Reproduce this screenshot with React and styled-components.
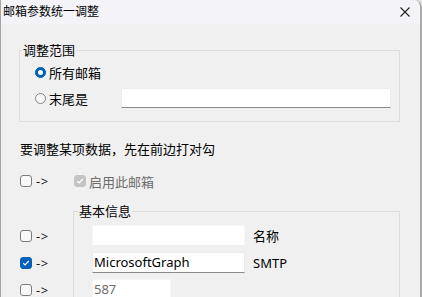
import React from 'react';
import styled, { createGlobalStyle } from 'styled-components';

const Global = createGlobalStyle`
  *, *::before, *::after { box-sizing: border-box; }
  html, body { margin: 0; padding: 0; background: #e2e2e2; }
  body {
    font-family: "Noto Sans", "Noto Sans CJK SC", sans-serif;
    font-size: 13px;
    color: #000;
  }
`;

const Window = styled.div`
  width: 422px;
  height: 297px;
  border-left: 1px solid #a4a4a4;
  border-right: 2px solid #a9a9a9;
  border-top-right-radius: 8px;
  background: #f0f0f0;
  overflow: hidden;
`;

const TitleBar = styled.div`
  height: 24px;
  background: #f3f3f8;
  display: flex;
  align-items: center;
  justify-content: space-between;
  padding: 0 10px 0 2px;
  font-size: 12px;
  line-height: 24px;
`;

const CloseIcon = () => (
  <svg width="10" height="10" viewBox="0 0 10 10">
    <path d="M0.5 0.5L9.5 9.5M9.5 0.5L0.5 9.5" stroke="#222" strokeWidth="1.1" fill="none" />
  </svg>
);

const Content = styled.div`
  padding: 18px 20px 0 18px;
`;

const Group = styled.fieldset`
  margin: 0;
  border: 1px solid #dcdcdc;
  padding: 0;
  min-width: 0;
`;

const Legend = styled.legend`
  padding: 0 1px;
  margin-left: ${p => p.$offset}px;
  line-height: 17px;
  font-size: 13px;
`;

const GroupBody = styled.div`
  padding: ${p => p.$pad};
`;

const RadioRow = styled.div`
  display: flex;
  align-items: center;
  height: 26px;
`;

const Radio = styled.span`
  width: 11px;
  height: 11px;
  border-radius: 50%;
  flex: 0 0 11px;
  margin-right: 3px;
  background: ${p => (p.$on ? '#005fb8' : '#f8f8f8')};
  border: 1px solid ${p => (p.$on ? '#005fb8' : '#858585')};
  display: flex;
  align-items: center;
  justify-content: center;
  &::after {
    content: '';
    display: ${p => (p.$on ? 'block' : 'none')};
    width: 5px;
    height: 5px;
    border-radius: 50%;
    background: #fff;
  }
`;

const TextBox = styled.div`
  flex: 0 0 ${p => p.$w}px;
  width: ${p => p.$w}px;
  height: ${p => p.$h || 20}px;
  margin-left: ${p => (p.$push ? 'auto' : '0')};
  background: #fff;
  border: 1px solid ${p => (p.$disabled ? '#f6f6f6' : '#ececec')};
  border-bottom: 1px solid ${p => (p.$disabled ? '#f0f0f0' : '#8b8b8b')};
  padding: 0 0 0 1px;
  font-size: 13px;
  line-height: ${p => (p.$h || 20) - 2}px;
  color: ${p => (p.$disabled ? '#6d6d6d' : '#000')};
  white-space: nowrap;
  overflow: hidden;
`;

const Hint = styled.div`
  margin-top: 18px;
  padding-left: 1px;
  line-height: 18px;
`;

const Grid = styled.div`
  display: grid;
  grid-template-columns: 54px 1fr;
  margin-top: ${p => p.$mt}px;
  align-items: ${p => p.$align || 'center'};
`;

const CheckColumn = styled.div`
  display: flex;
  flex-direction: column;
  padding-top: 19px;
`;

const CheckRow = styled.div`
  display: flex;
  align-items: center;
  height: ${p => p.$h || 27}px;
  padding-left: 1px;
`;

const Arrow = styled.span`
  margin-left: 4px;
  font-size: 13px;
  color: #1a1a1a;
  letter-spacing: 0.5px;
`;

const BoxWrap = styled.span`
  width: 12px;
  height: 12px;
  flex: 0 0 12px;
  border-radius: 3px;
  display: inline-flex;
  align-items: center;
  justify-content: center;
  background: ${p => (p.$variant === 'on' ? '#005fb8' : p.$variant === 'dis' ? '#c4c4c4' : '#f9f9f9')};
  border: 1px solid ${p => (p.$variant === 'on' ? '#005fb8' : p.$variant === 'dis' ? '#c4c4c4' : '#7d7d7d')};
  margin-left: ${p => p.$ml || 0}px;
`;

const Check = ({ variant, ml }) => (
  <BoxWrap $variant={variant} $ml={ml}>
    {variant !== 'off' && (
      <svg width="8" height="8" viewBox="0 0 8 8">
        <path d="M1.2 4.2L3.1 6L6.8 2" stroke="#fff" strokeWidth="1.2" fill="none" />
      </svg>
    )}
  </BoxWrap>
);

const EnableCell = styled.div`
  display: flex;
  align-items: center;
  height: 20px;
`;

const GrayText = styled.span`
  margin-left: 3px;
  color: #6d6d6d;
`;

const DetailRow = styled.div`
  display: flex;
  align-items: center;
  height: 27px;
`;

const FieldLabel = styled.span`
  margin-left: 8px;
`;

export default function App() {
  return (
    <>
      <Global />
      <Window>
        <TitleBar>
          <span>邮箱参数统一调整</span>
          <CloseIcon />
        </TitleBar>
        <Content>
          <Group>
            <Legend $offset={2}>调整范围</Legend>
            <GroupBody $pad="0 8px 10px 15px">
              <RadioRow>
                <Radio $on />
                <span>所有邮箱</span>
              </RadioRow>
              <RadioRow>
                <Radio />
                <span>末尾是</span>
                <TextBox $w={270} $push />
              </RadioRow>
            </GroupBody>
          </Group>

          <Hint>要调整某项数据，先在前边打对勾</Hint>

          <Grid $mt={13}>
            <CheckRow $h={20}>
              <Check variant="off" />
              <Arrow>-&gt;</Arrow>
            </CheckRow>
            <EnableCell>
              <Check variant="dis" ml={1} />
              <GrayText>启用此邮箱</GrayText>
            </EnableCell>
          </Grid>

          <Grid $mt={12} $align="start">
            <CheckColumn>
              <CheckRow>
                <Check variant="off" />
                <Arrow>-&gt;</Arrow>
              </CheckRow>
              <CheckRow>
                <Check variant="on" />
                <Arrow>-&gt;</Arrow>
              </CheckRow>
              <CheckRow>
                <Check variant="off" />
                <Arrow>-&gt;</Arrow>
              </CheckRow>
            </CheckColumn>
            <Group>
              <Legend $offset={4}>基本信息</Legend>
              <GroupBody $pad="2px 8px 10px 18px">
                <DetailRow>
                  <TextBox $w={153} $h={21} $disabled />
                  <FieldLabel>名称</FieldLabel>
                </DetailRow>
                <DetailRow>
                  <TextBox $w={153} $h={21}>MicrosoftGraph</TextBox>
                  <FieldLabel>SMTP</FieldLabel>
                </DetailRow>
                <DetailRow>
                  <TextBox $w={79} $h={21} $disabled>587</TextBox>
                </DetailRow>
              </GroupBody>
            </Group>
          </Grid>
        </Content>
      </Window>
    </>
  );
}
